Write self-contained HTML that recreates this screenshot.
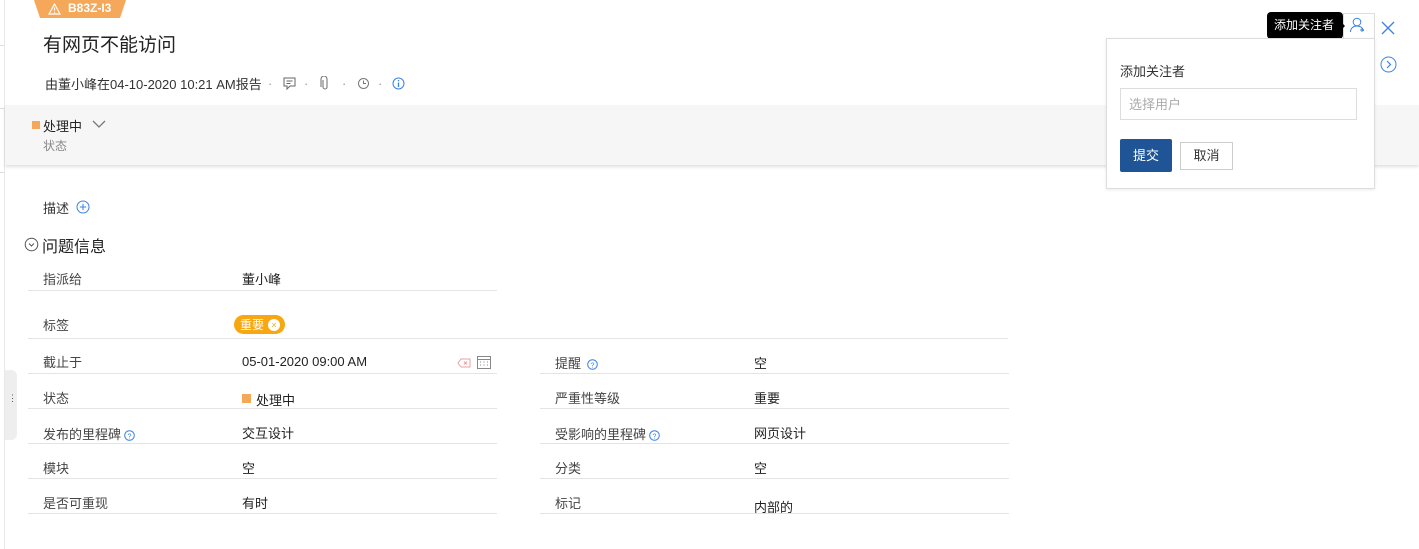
<!DOCTYPE html>
<html><head><meta charset="utf-8"><style>
*{margin:0;padding:0;box-sizing:border-box}
body{width:1419px;height:549px;overflow:hidden;background:#fff;font-family:"Liberation Sans","Noto Sans CJK SC",sans-serif;color:#222;position:relative;font-size:13px}
.a{position:absolute;white-space:nowrap}
.lbl{color:#444;font-size:13px;margin-top:-2px}
.val{color:#222;font-size:13px;margin-top:-2px}
.ln{position:absolute;height:1px;background:#e4e4e4}
</style></head><body>
<div class="a" style="left:4px;top:0;width:1px;height:549px;background:#e8e8e8"></div>
<div class="a" style="left:0;top:45px;width:4px;height:1px;background:#ddd"></div>
<div class="a" style="left:0;top:108px;width:4px;height:1px;background:#ddd"></div>
<div class="a" style="left:0;top:172px;width:4px;height:1px;background:#ddd"></div>
<svg class="a" style="left:34px;top:0" width="92" height="19"><polygon points="0,0 92,0 86,18 6,18" fill="#f5a85a"/></svg>
<svg class="a" style="left:48px;top:3px" width="13" height="12" viewBox="0 0 13 12"><path d="M6.5 1L12 11H1Z" fill="none" stroke="#fff" stroke-width="1.2"/><path d="M6.5 4.5v3M6.5 8.7v1" stroke="#fff" stroke-width="1.2"/></svg>
<div class="a" style="left:68px;top:1px;color:#fff;font-weight:bold;font-size:12px">B83Z-I3</div>
<div class="a" style="left:43px;top:30px;font-size:19px;color:#222">有网页不能访问</div>
<div class="a" style="left:45px;top:74px;font-size:13px;color:#333">由董小峰在04-10-2020 10:21 AM报告</div>
<div class="a" style="left:268px;top:76px;color:#999">·</div>
<svg class="a" style="left:283px;top:77px" width="14" height="13"><path d="M1 1h11v8H7l-3 3V9H1z" fill="none" stroke="#666"/><path d="M3.5 4h6M3.5 6.5h4" stroke="#666"/></svg>
<div class="a" style="left:304px;top:76px;color:#999">·</div>
<svg class="a" style="left:320px;top:76px" width="10" height="15"><path d="M3 4v7a2 2 0 004 0V3a3 3 0 00-6 0v8" fill="none" stroke="#777" stroke-width="1.1"/></svg>
<div class="a" style="left:342px;top:76px;color:#999">·</div>
<svg class="a" style="left:357px;top:77px" width="13" height="13"><circle cx="6.5" cy="6.5" r="5" fill="none" stroke="#777"/><path d="M6.5 3.5v3h2.5" fill="none" stroke="#777"/></svg>
<div class="a" style="left:378px;top:76px;color:#999">·</div>
<svg class="a" style="left:392px;top:77px" width="13" height="13"><circle cx="6.5" cy="6.5" r="5.5" fill="none" stroke="#3b82e0"/><path d="M6.5 5.5v4.5M6.5 3v1.3" stroke="#3b82e0" stroke-width="1.3"/></svg>
<div class="a" style="left:5px;top:105px;width:1414px;height:60px;background:#f6f6f6;box-shadow:0 2px 3px rgba(0,0,0,.12)"></div>
<div class="a" style="left:32px;top:121px;width:8px;height:8px;background:#f5a85a"></div>
<div class="a" style="left:43px;top:116px;font-size:13px;color:#222">处理中</div>
<svg class="a" style="left:92px;top:120px" width="14" height="9"><path d="M1 1l6 6 6-6" fill="none" stroke="#777" stroke-width="1.3"/></svg>
<div class="a" style="left:43px;top:137px;font-size:12px;color:#888">状态</div>
<div class="a" style="left:43px;top:198px;color:#333">描述</div>
<svg class="a" style="left:76px;top:200px" width="14" height="14"><circle cx="7" cy="7" r="6" fill="none" stroke="#3b82e0"/><path d="M7 3.8v6.4M3.8 7h6.4" stroke="#3b82e0"/></svg>
<svg class="a" style="left:24px;top:237px" width="15" height="15"><circle cx="7.5" cy="7.5" r="6.3" fill="none" stroke="#555"/><path d="M5 6.5l2.5 2.5 2.5-2.5" fill="none" stroke="#555"/></svg>
<div class="a" style="left:42px;top:233px;font-size:16px;color:#222">问题信息</div>
<div class="a" style="left:5px;top:370px;width:12px;height:70px;background:#eeeeee;border-radius:0 6px 6px 0"></div>
<div class="a" style="left:8px;top:396px;color:#555;font-size:9px;line-height:4px">⋮</div>
<div class="a lbl" style="left:43px;top:271px">指派给</div><div class="a val" style="left:242px;top:271px">董小峰</div>
<div class="ln" style="left:28px;top:290px;width:469px"></div>
<div class="a lbl" style="left:43px;top:317px">标签</div>
<div class="a" style="left:234px;top:315px;width:51px;height:19px;border-radius:10px;background:#f7a711"></div>
<div class="a" style="left:240px;top:316px;color:#fff;font-size:12px">重要</div>
<div class="a" style="left:268px;top:319px;width:12px;height:12px;border-radius:50%;background:#fff;color:#f7a711;font-size:9px;text-align:center;line-height:12px">×</div>
<div class="ln" style="left:28px;top:338px;width:980px"></div>
<div class="a lbl" style="left:43px;top:354px">截止于</div><div class="a val" style="left:242px;top:356px">05-01-2020 09:00 AM</div>
<svg class="a" style="left:457px;top:358px" width="14" height="10"><path d="M4 1h9v8H4L1 5z" fill="none" stroke="#e8a0a0"/><path d="M7 3.5l3 3M10 3.5l-3 3" stroke="#e8a0a0"/></svg>
<svg class="a" style="left:477px;top:356px" width="14" height="13"><rect x="0.5" y="0.5" width="13" height="12" fill="none" stroke="#888"/><path d="M0.5 3.5h13" stroke="#888"/><path d="M3 6h1M6.5 6h1M10 6h1M3 9h1M6.5 9h1M10 9h1" stroke="#888"/></svg>
<div class="ln" style="left:28px;top:373px;width:469px"></div>
<div class="a lbl" style="left:555px;top:355px">提醒</div>
<svg class="a" style="left:587px;top:359px" width="11" height="11"><circle cx="5.5" cy="5.5" r="4.8" fill="none" stroke="#3b82e0"/><text x="5.5" y="8.3" font-size="7" text-anchor="middle" fill="#3b82e0" font-family="Liberation Sans">?</text></svg>
<div class="a val" style="left:754px;top:355px">空</div>
<div class="ln" style="left:540px;top:373px;width:469px"></div>
<div class="a lbl" style="left:43px;top:390px">状态</div>
<div class="a" style="left:242px;top:394px;width:9px;height:9px;background:#f5a85a"></div>
<div class="a val" style="left:256px;top:392px">处理中</div>
<div class="ln" style="left:28px;top:408px;width:469px"></div>
<div class="a lbl" style="left:555px;top:390px">严重性等级</div><div class="a val" style="left:754px;top:390px">重要</div>
<div class="ln" style="left:540px;top:408px;width:469px"></div>
<div class="a lbl" style="left:43px;top:426px">发布的里程碑</div>
<svg class="a" style="left:124px;top:430px" width="11" height="11"><circle cx="5.5" cy="5.5" r="4.8" fill="none" stroke="#3b82e0"/><text x="5.5" y="8.3" font-size="7" text-anchor="middle" fill="#3b82e0" font-family="Liberation Sans">?</text></svg>
<div class="a val" style="left:242px;top:425px">交互设计</div>
<div class="ln" style="left:28px;top:443px;width:469px"></div>
<div class="a lbl" style="left:555px;top:426px">受影响的里程碑</div>
<svg class="a" style="left:649px;top:430px" width="11" height="11"><circle cx="5.5" cy="5.5" r="4.8" fill="none" stroke="#3b82e0"/><text x="5.5" y="8.3" font-size="7" text-anchor="middle" fill="#3b82e0" font-family="Liberation Sans">?</text></svg>
<div class="a val" style="left:754px;top:425px">网页设计</div>
<div class="ln" style="left:540px;top:443px;width:469px"></div>
<div class="a lbl" style="left:43px;top:460px">模块</div><div class="a val" style="left:242px;top:460px">空</div>
<div class="ln" style="left:28px;top:478px;width:469px"></div>
<div class="a lbl" style="left:555px;top:460px">分类</div><div class="a val" style="left:754px;top:460px">空</div>
<div class="ln" style="left:540px;top:478px;width:469px"></div>
<div class="a lbl" style="left:43px;top:495px">是否可重现</div><div class="a val" style="left:242px;top:495px">有时</div>
<div class="ln" style="left:28px;top:513px;width:469px"></div>
<div class="a lbl" style="left:555px;top:495px">标记</div><div class="a val" style="left:754px;top:499px">内部的</div>
<div class="ln" style="left:540px;top:513px;width:469px"></div>
<div class="a" style="left:1343px;top:13px;width:32px;height:28px;border:1px solid #ddd;background:#fff"></div>
<svg class="a" style="left:1349px;top:16px" width="18" height="18"><circle cx="8" cy="6" r="3.8" fill="none" stroke="#3b82e0"/><path d="M1.5 16c0-4 3-6 6.5-6s6 2 6.5 5" fill="none" stroke="#3b82e0"/><path d="M13 12v4M11 14h4" stroke="#3b82e0"/></svg>
<svg class="a" style="left:1381px;top:21px" width="14" height="14"><path d="M1 1l12 12M13 1L1 13" stroke="#3b82e0" stroke-width="1.3"/></svg>
<svg class="a" style="left:1380px;top:56px" width="17" height="17"><circle cx="8.5" cy="8.5" r="7.5" fill="none" stroke="#3b82e0"/><path d="M7 5l3.5 3.5L7 12" fill="none" stroke="#3b82e0" stroke-width="1.2"/></svg>
<div class="a" style="left:1267px;top:12px;width:76px;height:27px;background:#000;border-radius:4px"></div>
<div class="a" style="left:1340px;top:21px;width:0;height:0;border-top:5px solid transparent;border-bottom:5px solid transparent;border-left:5px solid #000"></div>
<div class="a" style="left:1274px;top:16px;color:#fff;font-size:12px">添加关注者</div>
<div class="a" style="left:1106px;top:38px;width:269px;height:151px;background:#fff;border:1px solid #ddd;box-shadow:0 1px 3px rgba(0,0,0,.08)"></div>
<div class="a" style="left:1120px;top:61px;color:#333">添加关注者</div>
<div class="a" style="left:1120px;top:88px;width:237px;height:32px;border:1px solid #ddd"></div>
<div class="a" style="left:1129px;top:94px;color:#aaa">选择用户</div>
<div class="a" style="left:1120px;top:139px;width:52px;height:33px;background:#1f5596;border-radius:2px;color:#fff;text-align:center;line-height:33px">提交</div>
<div class="a" style="left:1180px;top:142px;width:53px;height:28px;border:1px solid #ccc;color:#333;text-align:center;line-height:26px">取消</div>
</body></html>
